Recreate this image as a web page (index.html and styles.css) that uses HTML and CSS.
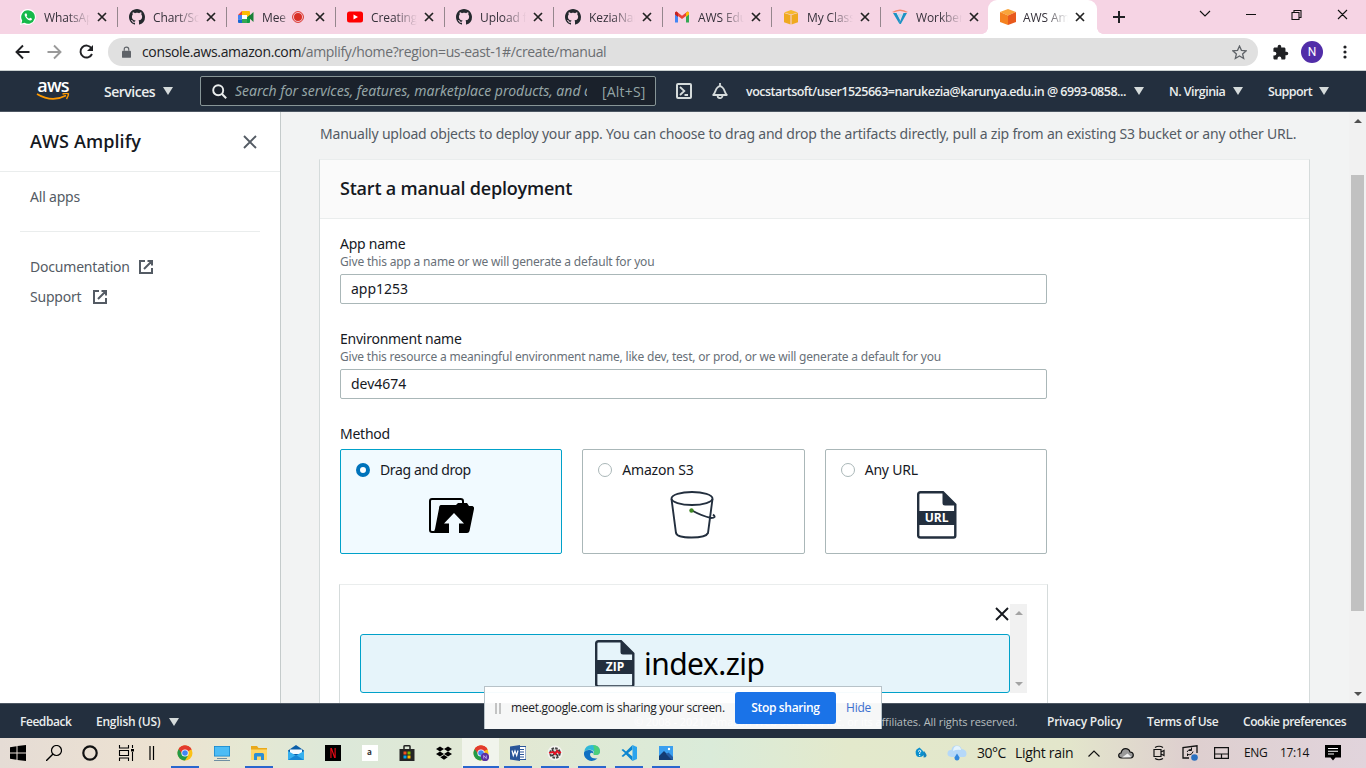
FILE: index.html
```html
<!DOCTYPE html>
<html lang="en">
<head>
<meta charset="utf-8">
<title>AWS Amplify Console</title>
<link rel="stylesheet" href="styles.css">
</head>
<body>
<svg class="defs" width="0" height="0">
  <symbol id="x" viewBox="0 0 10 10"><path d="M1 1l8 8M9 1L1 9" fill="none" stroke="currentColor" stroke-width="1.7"/></symbol>
  <symbol id="github" viewBox="0 0 16 16"><path fill="#24292e" d="M8 0C3.58 0 0 3.58 0 8c0 3.54 2.29 6.53 5.47 7.59.4.07.55-.17.55-.38 0-.19-.01-.82-.01-1.49-2.01.37-2.53-.49-2.69-.94-.09-.23-.48-.94-.82-1.13-.28-.15-.68-.52-.01-.53.63-.01 1.08.58 1.23.82.72 1.21 1.87.87 2.33.66.07-.52.28-.87.51-1.07-1.78-.2-3.64-.89-3.64-3.95 0-.87.31-1.59.82-2.15-.08-.2-.36-1.02.08-2.12 0 0 .67-.21 2.2.82.64-.18 1.32-.27 2-.27s1.36.09 2 .27c1.53-1.04 2.2-.82 2.2-.82.44 1.1.16 1.92.08 2.12.51.56.82 1.27.82 2.15 0 3.07-1.87 3.75-3.65 3.95.29.25.54.73.54 1.48 0 1.07-.01 1.93-.01 2.2 0 .21.15.46.55.38A8.01 8.01 0 0016 8c0-4.42-3.58-8-8-8z"/></symbol>
  <symbol id="caret" viewBox="0 0 10 8"><path d="M0 0h10L5 8z" fill="currentColor"/></symbol>
  <symbol id="ext" viewBox="0 0 14 14"><path d="M6 1H1v12h12V8M8.500 1H13v4.500M13 1L5 9" fill="none" stroke="#545b64" stroke-width="2"/></symbol>
  <symbol id="chrome" viewBox="0 0 16 16"><circle cx="8" cy="8" r="7.500" fill="#fbc116"/><path d="M8 8L1.500 4.250A7.500 7.500 0 0114.500 4.250z" fill="#e33b2e"/><path d="M8 8L1.500 4.250A7.500 7.500 0 008 15.500l3-5z" fill="#229a48"/><path d="M8 4.500H14.600L13.800 3.200A7.500 7.500 0 001.700 4L5 9z" fill="#e33b2e"/><circle cx="8" cy="8" r="3.600" fill="#fff"/><circle cx="8" cy="8" r="2.800" fill="#4285f4"/></symbol>
  <symbol id="file" viewBox="0 0 40 48"><path d="M3.500 1.200H26L38.300 13.500V44.500Q38.300 46.500 36.500 46.500H3.500Q1.200 46.500 1.200 44.500V3.500Q1.200 1.200 3.500 1.200z" fill="none" stroke="#232f3e" stroke-width="2.400"/><path d="M25.500 1l13 13.500H28q-2.500 0-2.500-2.500zM1 20h38v14H1z" fill="#232f3e"/></symbol>
</svg>

<div class="tabstrip">
  <div class="tab"><svg class="fav" viewBox="0 0 16 16"><path d="M8 0a8 8 0 00-7 12L0 16l4-1A8 8 0 108 0z" fill="#fff"/><path d="M8 1.200a6.800 6.800 0 00-5.800 10.300L1.500 14.500l3-.7A6.800 6.800 0 108 1.200z" fill="#16b94a"/><path d="M5 4.500c-1.500 2 2.500 7 5.200 7 1.500 0 2.200-1.600 1.500-2l-1.600-.8-1 1C7.800 9.300 7 8.400 6.500 7.300l.7-1-.7-1.800z" fill="#fff"/></svg><span class="tt">WhatsApp</span><svg class="tx"><use href="#x"/></svg></div>
  <div class="tab"><svg class="fav"><use href="#github"/></svg><span class="tt">Chart/Script</span><svg class="tx"><use href="#x"/></svg></div>
  <div class="tab"><svg class="fav" viewBox="0 0 16 16"><path d="M0 6l4-4v4z" fill="#ea4335"/><path d="M4 2h7.500v4H4z" fill="#fbbc04"/><path d="M0 6h4v4.500H0z" fill="#4285f4"/><path d="M0 10.500h4V14H1q-1 0-1-1z" fill="#1967d2"/><path d="M4 10h7.500v4H4z" fill="#34a853"/><path d="M9 8l3-3v7.500Q12 14 10.500 14H9z" fill="#0f9d45"/><path d="M9 2h1.500Q12 2 12 3.500V6L9 8z" fill="#fbbc04"/><path d="M10 8l5.500-5v10z" fill="#188038"/><path d="M4 6h5v4H4z" fill="#fff"/></svg><span class="tt short">Meet</span><svg class="rec" viewBox="0 0 12 12"><circle cx="6" cy="6" r="5.400" fill="none" stroke="#d93025" stroke-width="1"/><circle cx="6" cy="6" r="4" fill="#d93025"/></svg><svg class="tx"><use href="#x"/></svg></div>
  <div class="tab"><svg class="fav" viewBox="0 0 16 16"><rect y="2.500" width="16" height="11" rx="2.500" fill="#f00"/><path d="M6.500 5.500v5L11 8z" fill="#fff"/></svg><span class="tt">Creating a</span><svg class="tx"><use href="#x"/></svg></div>
  <div class="tab"><svg class="fav"><use href="#github"/></svg><span class="tt">Upload files</span><svg class="tx"><use href="#x"/></svg></div>
  <div class="tab"><svg class="fav"><use href="#github"/></svg><span class="tt">KeziaNaru</span><svg class="tx"><use href="#x"/></svg></div>
  <div class="tab"><svg class="fav" viewBox="0 0 16 16"><path d="M1 4v9.500h3V6z" fill="#4285f4"/><path d="M12 6v7.500h3V4z" fill="#34a853"/><path d="M1 3.500L2.500 2.500 8 6.800l5.500-4.300L15 3.500 12 7l-4 3-4-3z" fill="#ea4335"/><path d="M12 4l1.500-1.500Q15 2.500 15 4v1.500L12 8z" fill="#fbbc04"/><path d="M1 5.500V4q0-1.500 1.500-1.500L4 4v4z" fill="#c5221f"/></svg><span class="tt">AWS Educate</span><svg class="tx"><use href="#x"/></svg></div>
  <div class="tab"><svg class="fav" viewBox="0 0 16 16"><path d="M1 3.500L8 1l7 2.500L8 5.500z" fill="#f5b82e"/><path d="M1 4l6.500 2v9.500L1 13.200zM8.500 6L15 4v9.200l-6.500 2.300z" fill="#efa91f"/></svg><span class="tt">My Classroom</span><svg class="tx"><use href="#x"/></svg></div>
  <div class="tab last"><svg class="fav" viewBox="0 0 16 16"><path d="M0 3q8-5 16 0l-2 .5q-6-3-12 0z" fill="#f58a70"/><path d="M1 4h3.500L8 11l-.5 4zM15 4h-3.500L7 15h1.800z" fill="#1d92c4"/><path d="M5 5h6L8 9z" fill="#bfe1f0"/></svg><span class="tt">Workbench</span><svg class="tx"><use href="#x"/></svg></div>
  <div class="tab active"><svg class="fav" viewBox="0 0 16 16"><path d="M8 0l8 3-8 3.500L0 3z" fill="#f9a43a"/><path d="M0 3l8 3.500V16l-8-3z" fill="#f58220"/><path d="M16 3L8 6.500V16l8-3z" fill="#e8591c"/></svg><span class="tt">AWS Amplify</span><svg class="tx"><use href="#x"/></svg></div>
  <svg class="newtab" viewBox="0 0 12 12"><path d="M6 0v12M0 6h12" stroke="#202124" stroke-width="2"/></svg>
  <svg class="winctl" viewBox="0 0 152 14"><g fill="none" stroke="#111" stroke-width="1.100"><path d="M1 4l5 5 5-5M47 7.500h10M93 5.500h7v7h-7zM95 5.500v-2h7v7h-2M139 3l9 9M148 3l-9 9"/></g></svg>
</div>

<div class="toolbar">
  <svg class="nav" viewBox="0 0 84 18"><g fill="none" stroke-width="1.900"><path d="M15.500 9H3M9 2.500L2.500 9 9 15.500" stroke="#202124"/><path d="M33.500 9h12.500M40 2.500L46.500 9l-6.500 6.500" stroke="#9a9a9a"/><path d="M77.500 5.200A6 6 0 1078 11" stroke="#202124"/></g><path d="M79 2v6h-6z" fill="#202124"/></svg>
  <div class="omni">
    <svg class="lock" viewBox="0 0 10 13"><path d="M1 5h8q1 0 1 1v6q0 1-1 1H1q-1 0-1-1V6q0-1 1-1z" fill="#5f6368"/><path d="M2.500 5V3.500a2.500 2.500 0 015 0V5" fill="none" stroke="#5f6368" stroke-width="1.300"/></svg>
    <span class="url"><b>console.aws.amazon.com</b>/amplify/home?region=us-east-1#/create/manual</span>
    <svg class="star" viewBox="0 0 14 14"><path d="M7 1l1.800 4 4.400.4-3.300 2.900 1 4.300L7 10.300l-3.900 2.300 1-4.300L.8 5.400 5.200 5z" fill="none" stroke="#5f6368" stroke-width="1.200"/></svg>
  </div>
  <svg class="puzzle" viewBox="0 0 24 24"><path fill="#202124" d="M20.500 11H19V7c0-1.100-.9-2-2-2h-4V3.500a2.500 2.500 0 00-5 0V5H4c-1.100 0-2 .9-2 2v3.800h1.500a2.700 2.700 0 010 5.400H2V20c0 1.100.9 2 2 2h3.800v-1.500a2.700 2.700 0 015.400 0V22H17c1.100 0 2-.9 2-2v-4h1.500a2.500 2.500 0 000-5z"/></svg>
  <div class="avatar">N</div>
  <svg class="dots" viewBox="0 0 4 14"><circle cx="2" cy="2" r="1.600"/><circle cx="2" cy="7" r="1.600"/><circle cx="2" cy="12" r="1.600"/></svg>
</div>

<header class="aws">
  <div class="logo"><span>aws</span><svg viewBox="0 0 34 9"><path d="M1 1q15 9 29 1.500" fill="none" stroke="#f90" stroke-width="1.700"/><path d="M26.500 1q5-1.500 6 0 0 2-2 5" fill="none" stroke="#f90" stroke-width="1.400"/></svg></div>
  <div class="services"><span>Services</span><svg class="caret"><use href="#caret"/></svg></div>
  <div class="search"><svg class="mag" viewBox="0 0 15 15"><circle cx="6.200" cy="6.200" r="5" fill="none" stroke="#eaeded" stroke-width="1.900"/><path d="M10 10l4.200 4.200" stroke="#eaeded" stroke-width="2"/></svg><span class="ph">Search for services, features, marketplace products, and d</span><span class="alt">[Alt+S]</span></div>
  <svg class="shell" viewBox="0 0 16 16"><rect x="1" y="1" width="14" height="14" rx="1" fill="none" stroke="#d5dbdb" stroke-width="2"/><path d="M4 4l4.300 4L4 12M8.500 12H12" fill="none" stroke="#d5dbdb" stroke-width="1.800"/></svg>
  <svg class="bell" viewBox="0 0 16 16"><path d="M1.200 12C4 9.500 3.200 4 8 3.200 12.800 4 12 9.500 14.800 12z" fill="none" stroke="#d5dbdb" stroke-width="1.800" stroke-linejoin="round"/><path d="M8 0v3M5.500 12.500a2.500 2.700 0 005 0" fill="none" stroke="#d5dbdb" stroke-width="1.800"/></svg>
  <div class="acct"><span>vocstartsoft/user1525663=narukezia@karunya.edu.in @ 6993-0858...</span><svg class="caret"><use href="#caret"/></svg></div>
  <div class="region"><span>N. Virginia</span><svg class="caret"><use href="#caret"/></svg></div>
  <div class="supp"><span>Support</span><svg class="caret"><use href="#caret"/></svg></div>
</header>

<div class="workspace">
  <nav class="side">
    <div class="side-head"><h2>AWS Amplify</h2><svg viewBox="0 0 14 14"><path d="M1 1l12 12M13 1L1 13" stroke="#545b64" stroke-width="1.900"/></svg></div>
    <div class="side-apps"><span>All apps</span></div>
    <div class="side-links">
      <a><span class="docs">Documentation</span><svg><use href="#ext"/></svg></a>
      <a><span class="sup">Support</span><svg><use href="#ext"/></svg></a>
    </div>
  </nav>
  <main>
    <p class="intro">Manually upload objects to deploy your app. You can choose to drag and drop the artifacts directly, pull a zip from an existing S3 bucket or any other URL.</p>
    <section class="card">
      <div class="card-head"><h1>Start a manual deployment</h1></div>
      <div class="card-body">
        <div class="field"><label>App name</label><small>Give this app a name or we will generate a default for you</small><div class="input">app1253</div></div>
        <div class="field"><label>Environment name</label><small class="long">Give this resource a meaningful environment name, like dev, test, or prod, or we will generate a default for you</small><div class="input">dev4674</div></div>
        <label class="method">Method</label>
        <div class="tiles">
          <div class="tile on"><div class="opt"><i></i><span class="o1">Drag and drop</span></div>
            <svg class="folder" viewBox="0 0 45 36"><path d="M5 34H3Q1 34 1 32V3Q1 1 3 1H31.500Q34 1 34 3V8" fill="none" stroke="#000" stroke-width="2"/><path d="M12 7H27L29 5H38L40 8H43.500Q45.500 9 45 11L40.500 33Q40 35 38 35H30V25.500H35L25 15 15 25.500H20V35H3Q5.500 34 6 31L10 10.500Q10 7 12 7z"/></svg></div>
          <div class="tile"><div class="opt"><i></i><span>Amazon S3</span></div>
            <svg class="bucket" viewBox="0 0 46 48"><g fill="none" stroke="#232f3e" stroke-width="1.900"><ellipse cx="22" cy="7.500" rx="20.500" ry="6.500"/><path d="M1.500 8L6 42Q7 46.500 21.500 46.500T38 42L42.500 8M22 19.500Q32 25 41 27 47 27 43 23.500"/></g><circle cx="21.500" cy="19.500" r="2.200" fill="#3f8624"/></svg></div>
          <div class="tile"><div class="opt"><i></i><span>Any URL</span></div>
            <div class="fileicon url-file"><svg><use href="#file"/></svg><b>URL</b></div></div>
        </div>
        <div class="drop">
          <div class="drop-main">
            <div class="drop-close"><svg viewBox="0 0 14 14"><path d="M1 1l12 12M13 1L1 13" stroke="#16191f" stroke-width="1.900"/></svg></div>
            <div class="zip"><div class="fileicon"><svg><use href="#file"/></svg><b>ZIP</b></div><span>index.zip</span></div>
          </div>
          <div class="minibar"><svg viewBox="0 0 8 4"><path d="M0 4h8L4 0z" fill="#a3a3a3"/></svg><svg viewBox="0 0 8 4"><path d="M0 0h8L4 4z" fill="#a3a3a3"/></svg></div>
        </div>
      </div>
    </section>
  </main>
  <div class="scroll"><svg viewBox="0 0 8 4"><path d="M0 4h8L4 0z" fill="#505050"/></svg><div class="thumb"></div><svg viewBox="0 0 8 4"><path d="M0 0h8L4 4z" fill="#505050"/></svg></div>
</div>

<footer class="foot">
  <span class="fb">Feedback</span><span class="lang">English (US)</span><svg class="caret"><use href="#caret"/></svg>
  <span class="copy">© 2008 - 2021, Amazon Web Services, Inc. or its affiliates. All rights reserved.</span>
  <span class="pp">Privacy Policy</span><span class="tou">Terms of Use</span><span class="ck">Cookie preferences</span>
</footer>

<div class="share">
  <svg class="grip" viewBox="0 0 6 11"><path d="M1 0v11M5 0v11" stroke="#bdbdbd" stroke-width="1.800"/></svg>
  <span class="msg">meet.google.com is sharing your screen.</span>
  <span class="stop">Stop sharing</span><span class="hide">Hide</span>
</div>

<div class="taskbar">
  <div class="w"><svg viewBox="0 0 16 16"><path d="M0 2.300L6.500 1.300V7.500H0zM7.500 1.100L16 0v7.500H7.500zM0 8.500h6.500v6.200L0 13.700zM7.500 8.500H16V16l-8.500-1.100z"/></svg></div>
  <div class="w"><svg viewBox="0 0 16 16"><circle cx="10.500" cy="5.500" r="5" fill="none" stroke="#000" stroke-width="1.200"/><path d="M7 9L0 16" stroke="#000" stroke-width="1.400"/></svg></div>
  <div class="w"><svg viewBox="0 0 16 16"><circle cx="8" cy="8" r="6.700" fill="none" stroke="#111" stroke-width="2.200"/></svg></div>
  <div class="w"><svg viewBox="0 0 16 16"><path d="M1.500 0v3h9V0M1.500 16v-3h9v3M1.500 5.500h9v5h-9zM14.500 0v3M14.500 7v9" fill="none" stroke="#000" stroke-width="1.100"/><path d="M13 4h3v2.500h-3z"/></svg></div>
  <div class="bars"><svg viewBox="0 0 6 14"><path d="M1 0v14M4.500 0v14" stroke="#000" stroke-width="1.200"/></svg></div>
  <div class="t run"><svg><use href="#chrome"/></svg></div>
  <div class="t"><svg viewBox="0 0 16 16"><path d="M0 1h16v10.500H0z" fill="#1684c8"/><path d="M.7 1.700h14.600v9H.7z" fill="#4cbcf5"/><path d="M3 13h10v1H3zM0 15h16v1H0z" fill="#6e8ea3"/></svg></div>
  <div class="t run"><svg viewBox="0 0 16 16"><path d="M0 1h6l1.500 2H16v12H0z" fill="#e9a91b"/><path d="M0 4.500h16V15H0z" fill="#ffd767"/><path d="M3 15V9.500Q3 8 4.500 8h7Q13 8 13 9.500V15h-3v-3.500H6V15z" fill="#2d8fd5"/></svg></div>
  <div class="t"><svg viewBox="0 0 16 16"><path d="M0 5.500L8 0l8 5.500v9H0z" fill="#0a5ea8"/><path d="M2 4.500h12V9H2z" fill="#f4fbff"/><path d="M0 6l8 4.500L16 6v9H0z" fill="#36b0ee"/><path d="M0 15l8-5 8 5z" fill="#1687d5"/></svg></div>
  <div class="t"><div class="tile-n"><b>N</b></div></div>
  <div class="t"><div class="tile-a">a</div></div>
  <div class="t"><svg viewBox="0 0 16 16"><path d="M5 4V1.500Q5 .8 6 .8h4q1 0 1 .7V4" fill="none" stroke="#222" stroke-width="1.500"/><path d="M.5 4h15v12H.5z" fill="#252525"/><path d="M4.500 6.500h3v3h-3z" fill="#f25022"/><path d="M8.500 6.500h3v3h-3z" fill="#7fba00"/><path d="M4.500 10.500h3v3h-3z" fill="#00a4ef"/><path d="M8.500 10.500h3v3h-3z" fill="#ffb900"/></svg></div>
  <div class="t"><svg viewBox="0 0 16 16"><path d="M4 1.500l4 2.500-4 2.500L0 4zM12 1.500L16 4l-4 2.500L8 4zM4 6.500L8 9l-4 2.500L0 9zM12 6.500L16 9l-4 2.500L8 9zM8 10l3.700 2.300L8 14.800l-3.700-2.500z"/></svg></div>
  <div class="t run hot"><svg viewBox="0 0 16 16"><use href="#chrome"/><circle cx="12" cy="12" r="4.200" fill="#5a32a3"/><path d="M10.700 13.500v-3l2.600 3v-3" fill="none" stroke="#d9c8ff" stroke-width=".7"/></svg></div>
  <div class="t run"><svg viewBox="0 0 16 16"><path d="M8 1.500h8v13H8z" fill="#fff" stroke="#2a5699"/><path d="M9 4.500h5M9 7h5M9 9.500h5M9 12h5" stroke="#2a5699" stroke-width="1.200"/><path d="M0 1.500L10 0v16L0 14.500z" fill="#2a5699"/><path d="M2 5.500l1.300 5L5 6l1.700 4.500L8 5.500" fill="none" stroke="#fff" stroke-width="1.200"/></svg></div>
  <div class="t run"><svg viewBox="0 0 16 16"><circle cx="8" cy="8" r="7.500" fill="#f3f3ef"/><circle cx="8" cy="8" r="4.800" fill="#ddd" stroke="#444" stroke-width="2" stroke-dasharray="2.500 1.200"/><path d="M5 5l6 6M11 5l-6 6" stroke="#333" stroke-width="1.500"/><path d="M2 8l4-1 2 2 2-3 2 2 2-1" fill="none" stroke="#e81123" stroke-width="1.800"/></svg></div>
  <div class="t run"><svg viewBox="0 0 16 16"><path d="M.2 7Q1 0 8 0q7.500 0 8 6 0 4-4 4-3 0-2.300-1.500C11 6 7 4 4 5Q1 5.500.2 7z" fill="#31b8d8"/><path d="M9 .1Q15.500.5 16 6q0 4-4 4-3 0-2.300-1.500Q11 5 9 .1z" fill="#4ccf7a"/><path d="M.2 7Q2 4.500 6 5 9.500 5.500 9.500 8.500 6 6.500 6 10q1 4 7.500 3.500Q9 17.500 4 15-1 12 .2 7z" fill="#1170c2"/></svg></div>
  <div class="t run"><svg viewBox="0 0 16 16"><path d="M.5 5L2 4l3 2.500L11.500 0v4.500L7 8l4.500 3.500V16L5 9.500 2 12 .5 11 4 8z" fill="#0a85d0"/><path d="M11.500 0L16 2v12l-4.500 2z" fill="#2aa4ee"/></svg></div>
  <div class="t run"><svg viewBox="0 0 16 16"><path d="M1 1h14v14H1z" fill="#3a9ff0"/><path d="M1 11l5-5 9 9H1z" fill="#143c74"/><path d="M8 9l2.500-1.500L15 12v3h-1z" fill="#235da5"/><circle cx="11" cy="4" r="1.200" fill="#fff"/></svg></div>
  <div class="tray">
    <svg class="help" viewBox="0 0 12 12"><path d="M4.500.5l4 4q2 2.500 0 4T4 10 .8 7 1.500 2.500z" fill="#0a8fcd"/><path d="M9 4q3 3.500 2.500 5t-3 1.500z" fill="#1582bb"/><path d="M3 4.500q1.500-2 2.700-.7.6 1-1 1.800V7M4.700 8v1" fill="none" stroke="#fff"/></svg>
    <svg class="cloud" viewBox="0 0 20 16"><path d="M4.500 12Q0 11.500.5 8T4.500 5Q5 .5 9.500.5T14.500 4Q19.500 4.500 19.500 8.500T16 12z" fill="#b5d8f8"/><path d="M6 6Q6.500 1 10 1t4 4Q10 4 6 6z" fill="#e5f4fe"/><path d="M10 8.500l2.500 4Q12.500 15.500 10 15.500t-2.500-3z" fill="#3287dd"/></svg>
    <span class="temp">30°C</span><span class="rain">Light rain</span>
    <svg class="up" viewBox="0 0 12 7"><path d="M.5 6.500L6 1l5.500 5.500" fill="none" stroke="#111" stroke-width="1.200"/></svg>
    <svg class="od" viewBox="0 0 16 11"><path d="M3.500 10Q.7 9.800.7 7.500T3 5Q4 .7 7.500.7T12 4Q15.300 4.300 15.300 7T12.500 10z" fill="#999" stroke="#111" stroke-width="1.200"/><path d="M4 9.500l5.500-4 4 3.800z" fill="#eee"/></svg>
    <svg class="cam" viewBox="0 0 12 16"><path d="M2 2.500Q6 0 10 2.500M2 13.500Q6 16 10 13.500M1 4.500h7v7H1zM8 7l3-1.500v5L8 9" fill="none" stroke="#111" stroke-width="1.200"/></svg>
    <svg class="upd" viewBox="0 0 16 16"><path d="M7 13H1V2.500L15 .8V8" fill="none" stroke="#111" stroke-width="1.300"/><path d="M5 7q1-3 5-2.500M11 6.500q-1 4-6 3M9.500 2.500v3H7M5.500 11V8.500" fill="none" stroke="#111"/><circle cx="12.500" cy="12.500" r="3.300" fill="#2a70c0"/></svg>
    <svg class="pad" viewBox="0 0 15 12"><path d="M.6.600h13.800v10.800H.6zM.6 7h13.800M7.500 7v4.400" fill="none" stroke="#111" stroke-width="1.200"/></svg>
    <span class="eng">ENG</span><span class="time">17:14</span>
    <svg class="note" viewBox="0 0 16 16"><path d="M0 0h16v12.500H10.500L8 15.500 5.500 12.500H0z"/><path d="M3 3.500h10M3 6.300h10M3 9h6" stroke="#fff" stroke-width="1.100"/></svg>
  </div>
</div>
</body>
</html>
```

FILE: styles.css
```css
* { box-sizing: border-box; }
body { margin: 0; width: 1366px; height: 768px; overflow: hidden; display: flex; flex-direction: column; font-family: "Noto Sans", "Open Sans", sans-serif; font-size: 14px; color: #16191f; position: relative; background: #fff; }
svg { display: block; flex: none; }
span, small, label, h1, h2, p { white-space: nowrap; }
.defs { position: absolute; }

.tabstrip { height: 34px; flex: none; background: #f6d4e4; display: flex; padding-left: 9px; }
.tab { width: 109px; height: 34px; flex: none; display: flex; align-items: center; padding-left: 11px; background: linear-gradient(#95868d, #95868d) right 7px / 1px 20px no-repeat; font-family: "Open Sans", sans-serif; font-size: 12px; color: #35313a; }
.tab.last { background: none; width: 107px; }
.tab.active { background: #fff; border-radius: 9px 9px 0 0; position: relative; }
.tab.active::before, .tab.active::after { content: ""; position: absolute; bottom: 0; width: 6px; height: 6px; }
.tab.active::before { left: -6px; background: radial-gradient(circle at 0 0, transparent 5.5px, #fff 6px); }
.tab.active::after { right: -6px; background: radial-gradient(circle at 100% 0, transparent 5.5px, #fff 6px); }
.tab.active .fav { margin-left: 1px; }
.fav { width: 16px; height: 16px; }
.tt { width: 46px; margin-left: 8px; overflow: hidden; letter-spacing: -.1px; -webkit-mask-image: linear-gradient(to right, #000 50%, transparent); mask-image: linear-gradient(to right, #000 50%, transparent); }
.tt.short { width: 24px; -webkit-mask-image: linear-gradient(to right, #000 70%, #0006); mask-image: linear-gradient(to right, #000 70%, #0006); }
.rec { width: 12px; height: 12px; margin: 0 4px 0 6px; }
.tx { width: 10px; height: 10px; margin-left: 7px; color: #222; }
.tab.active .tt { margin-left: 7px; width: 45px; }
.newtab { width: 12px; height: 12px; margin: 11px 0 0 16px; }
.winctl { width: 152px; height: 14px; margin: 7px 0 0 74px; }

.toolbar { height: 37px; flex: none; display: flex; align-items: center; border-bottom: 1px solid #c9d0d0; }
.nav { width: 84px; height: 18px; margin-left: 14px; }
.omni { width: 1150px; height: 28px; margin-left: 10px; border-radius: 14px; background: #e0e0e0; display: flex; align-items: center; padding-left: 14px; }
.lock { width: 9px; height: 12px; margin-bottom: 1px; }
.url { width: 1089px; margin-left: 11px; color: #6b6e72; font-family: "Open Sans", sans-serif; font-size: 14px; line-height: 20px; margin-bottom: 1px; letter-spacing: -.35px; }
.url b { font-weight: 400; color: #202124; }
.star { width: 15px; height: 15px; margin-left: 1px; }
.puzzle { width: 17px; height: 17px; margin-left: 14px; }
.avatar { width: 22px; height: 22px; margin-left: 12px; border-radius: 50%; background: #512da8; color: #fff; font: 12px/22px Roboto, sans-serif; text-align: center; }
.dots { width: 4px; height: 14px; margin-left: 20px; fill: #202124; }

.aws { height: 41px; flex: none; background: #232f3e; border-bottom: 1px solid #4d5763; display: flex; align-items: center; color: #eaeded; font-weight: 600; font-family: "Open Sans", sans-serif; }
.logo { width: 34px; margin-left: 36px; height: 41px; padding-top: 6px; }
.logo span { display: block; font: 600 18px/16px "Open Sans", sans-serif; letter-spacing: -.8px; color: #fff; text-align: center; }
.logo svg { width: 34px; height: 9px; }
.caret { width: 10px; height: 8px; color: #d5dbdb; }
.aws .services { display: flex; align-items: center; width: 96px; margin-left: 34px; font-size: 14px; }
.services span { width: 59px; letter-spacing: -.5px; }
.search { width: 456px; height: 30px; background: #1a212b; border: 1px solid #879596; border-radius: 2px; display: flex; align-items: center; padding-left: 11px; font-weight: 400; }
.mag { width: 15px; height: 15px; }
.ph { width: 352px; margin-left: 8px; overflow: hidden; font: italic 14px/20px "Noto Sans", sans-serif; letter-spacing: -.02px; color: #95a5a6; }
.alt { margin-left: 15px; color: #95a5a6; font-size: 14px; letter-spacing: .2px; }
.shell { width: 16px; height: 16px; margin-left: 20px; }
.bell { width: 16px; height: 16px; margin-left: 20px; }
.acct, .region, .supp { display: flex; align-items: center; font-size: 12.500px; }
.acct { margin-left: 18px; } .acct span { width: 388px; letter-spacing: -.5px; }
.region { margin-left: 25px; } .region span { width: 64px; letter-spacing: -.55px; }
.supp { margin-left: 25px; } .supp span { width: 51px; letter-spacing: -.6px; }

.workspace { height: 591px; flex: none; display: flex; overflow: hidden; background: #f2f3f3; }
.side { width: 281px; flex: none; background: #fff; border-right: 1px solid #c5cbcb; color: #545b64; letter-spacing: -.2px; }
.side-head { height: 60px; border-bottom: 1px solid #eaeded; display: flex; align-items: center; padding-left: 30px; }
.side-head h2 { margin: -2px 0 0; width: 213px; font: 600 18px/22px "Open Sans", sans-serif; color: #16191f; letter-spacing: .1px; }
.side-head svg { width: 14px; height: 14px; }
.side-apps { height: 60px; margin: 0 20px; padding: 15px 0 0 10px; border-bottom: 1px solid #eaeded; line-height: 20px; }
.side-links { padding: 25px 0 0 30px; }
.side-links a { display: flex; align-items: center; height: 20px; margin-bottom: 10px; }
.side-links a span { line-height: 20px; margin-bottom: 1px; }
.side-links svg { width: 14px; height: 14px; }
.docs { width: 109px; } .sup { width: 63px; }
main { width: 1068px; flex: none; padding-left: 38px; }
.intro { margin: 0; padding: 12px 0 0 1px; height: 47px; line-height: 20px; color: #545b64; letter-spacing: -.2px; }
.card { width: 991px; height: 560px; background: #fff; border: 1px solid #d5dbdb; border-top-color: #eaeded; }
.card-head { height: 59px; background: #fafafa; border-bottom: 1px solid #eaeded; padding: 17px 20px; }
.card-head h1 { margin: 0; font: 600 18px/22px "Open Sans", sans-serif; letter-spacing: -.2px; }
.card-body { padding: 15px 20px; width: 747px; }
.field { height: 95px; display: flex; flex-direction: column; }
.field label, .method { display: block; line-height: 20px; height: 20px; letter-spacing: -.25px; }
.field small { font-size: 12px; line-height: 16px; height: 16px; color: #687078; margin-bottom: 4px; letter-spacing: -.18px; }
.field small.long { letter-spacing: -.2px; }
.input { height: 30px; border: 1px solid #aab7b8; border-radius: 2px; padding-left: 10px; line-height: 28px; }
.tiles { display: flex; gap: 20px; margin-top: 5px; }
.tile { flex: 1; height: 105px; border: 1px solid #aab7b8; border-radius: 2px; padding-top: 10px; display: flex; flex-direction: column; }
.tile.on { border-color: #00a1c9; background: #f1faff; }
.opt { display: flex; align-items: center; height: 20px; padding-left: 15px; margin-bottom: 11px; }
.opt span { line-height: 20px; margin-bottom: 1px; letter-spacing: -.2px; }
.opt .o1 { letter-spacing: -.38px; }
.opt i { width: 14px; height: 14px; border: 1px solid #aab7b8; border-radius: 50%; background: #fff; margin-right: 10px; }
.on .opt i { border: 4px solid #0073bb; }
.folder { width: 45px; height: 36px; margin: 7px 0 0 88px; }
.bucket { width: 46px; height: 48px; margin-left: 87px; }
.fileicon { width: 40px; height: 48px; position: relative; flex: none; }
.fileicon svg { width: 40px; height: 48px; }
.fileicon b { position: absolute; left: 0; width: 40px; top: 20px; text-align: center; font: 700 12px/14px "Open Sans", sans-serif; color: #fff; }
.url-file { margin: 0 0 0 91px; }
.drop { width: 709px; height: 150px; margin: 30px 0 0 -1px; border: 1px solid #d5dbdb; border-top-color: #eaeded; padding: 19px 20px; display: flex; }
.drop-main { width: 650px; }
.drop-close { height: 30px; display: flex; justify-content: flex-end; padding: 3px 1px; }
.drop-close svg { width: 14px; height: 14px; }
.zip { height: 59px; border: 1px solid #00a1c9; border-radius: 3px; background: #e6f4fa; display: flex; align-items: center; justify-content: center; color: #000; font-size: 30px; padding-right: 10px; }
.zip > span { margin-left: 9px; width: 121px; letter-spacing: -.55px; }
.minibar { width: 17px; height: 89px; background: #f1f1f1; display: flex; flex-direction: column; justify-content: space-between; align-items: center; padding: 7px 0; }
.minibar svg, .scroll svg { width: 8px; height: 4px; }
.scroll { width: 17px; background: #f1f1f1; display: flex; flex-direction: column; align-items: center; padding-top: 7px; }
.thumb { width: 13px; height: 436px; margin: 52px 0 81px; background: #c1c1c1; flex: none; }

.foot { height: 35px; flex: none; background: #232f3e; border-top: 1px solid #4d5763; display: flex; align-items: center; padding: 2px 0 0 20px; color: #eaeded; font: 600 12px/16px "Open Sans", sans-serif; }
.fb { width: 76px; letter-spacing: -.45px; } .lang { width: 73px; letter-spacing: -.25px; margin-bottom: 1px; }
.copy { width: 384px; margin: 0 0 1px 455px; color: #b7bebe; font-weight: 400; font-size: 11px; letter-spacing: -.07px; }
.pp { width: 100px; margin-left: 29px; letter-spacing: -.25px; } .tou { width: 96px; letter-spacing: -.38px; } .ck { letter-spacing: -.48px; }

.share { position: absolute; left: 484px; top: 686px; width: 398px; height: 43px; background: rgba(255,255,255,.96); border: 1px solid #b7c2c8; border-bottom: 0; display: flex; align-items: center; font: 12px/16px "Open Sans", sans-serif; color: #202124; }
.grip { width: 6px; height: 11px; margin-left: 10px; }
.msg { width: 215px; margin-left: 10px; letter-spacing: -.29px; }
.stop { width: 101px; height: 32px; margin-left: 9px; border-radius: 3px; background: #1a73e8; color: #fff; font-weight: 600; line-height: 32px; text-align: center; letter-spacing: -.35px; }
.hide { margin-left: 10px; color: #3c6fd0; letter-spacing: -.2px; }

.taskbar { height: 30px; flex: none; display: flex; background: linear-gradient(90deg, #e5dcd5 0%, #ede2d1 12%, #e5e8d3 18%, #dce8d9 25%, #e2e8d3 38%, #daebd9 52%, #e3e9cc 62%, #e3e6cb 78%, #decfcf 87%, #e1d4dc 100%); }
.taskbar > .w, .taskbar > .t, .bars { display: flex; align-items: center; justify-content: center; }
.w { width: 36px; } .t { width: 37px; background: linear-gradient(#2a66ce, #2a66ce) center bottom / 0 2px no-repeat; }
.t.run { background-size: 28px 2px; }
.t.hot { background-color: #f1f4ec; background-size: 36px 2px; }
.w svg, .t svg { width: 16px; height: 16px; }
.bars { width: 22px; padding-right: 6px; }
.bars svg { width: 6px; height: 14px; }
.tile-n, .tile-a { width: 16px; height: 16px; text-align: center; }
.tile-n { background: #000; color: #e50914; font: 14px/16px "Liberation Sans", sans-serif; }
.tile-n b { display: block; transform: scaleX(.65); }
.tile-a { background: #fff; color: #333; font: 700 8px/14px "Open Sans", sans-serif; }
.tray { display: flex; align-items: center; margin-left: 231px; font: 14px/20px "Open Sans", sans-serif; color: #111; }
.help { width: 12px; height: 12px; } .cloud { width: 20px; height: 16px; margin-left: 20px; }
.temp { width: 38px; margin-left: 10px; letter-spacing: -.5px; } .rain { width: 58px; letter-spacing: -.3px; }
.up { width: 12px; height: 7px; margin-left: 15px; }
.od { width: 16px; height: 11px; margin-left: 18px; }
.cam { width: 12px; height: 16px; margin-left: 19px; }
.upd { width: 16px; height: 16px; margin-left: 17px; }
.pad { width: 15px; height: 12px; margin-left: 16px; }
.eng { width: 36px; margin-left: 15px; font-size: 12px; letter-spacing: -.3px; } .time { width: 45px; font-size: 12px; letter-spacing: -.3px; }
.note { width: 16px; height: 16px; }
```
